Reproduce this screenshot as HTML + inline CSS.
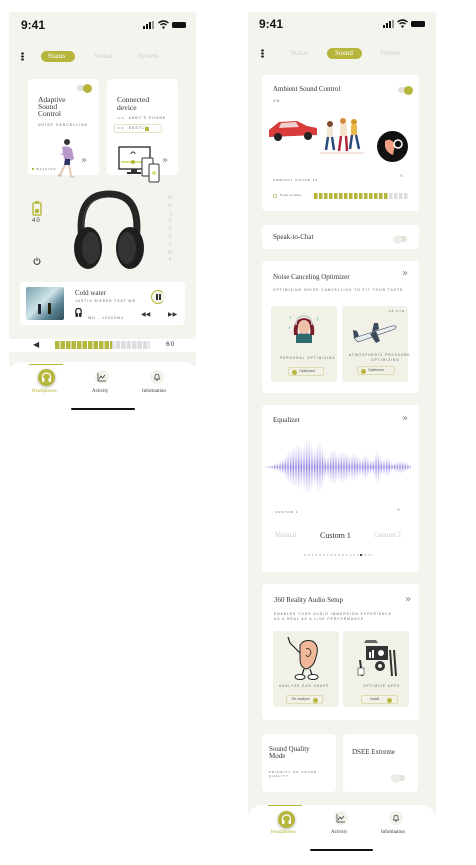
<!DOCTYPE html>
<html><head><meta charset="utf-8"><style>
*{margin:0;padding:0;box-sizing:border-box}
body{width:476px;height:865px;background:#fff;position:relative;overflow:hidden;font-family:"Liberation Serif",serif;color:#333}
.a{position:absolute}
.bg{background:#f4f4ee}
.card{position:absolute;background:#fff;border-radius:4px}
.sub{position:absolute;background:#f1f1e8;border-radius:3px}
.t{position:absolute;white-space:nowrap}
.cap{font-size:3.5px;letter-spacing:1px;color:#666;font-family:"Liberation Sans",sans-serif}
.ol{background:#b6b53c}
.tog{position:absolute;width:14px;height:6px;border-radius:3px;background:#e2e2da}
.tog i{position:absolute;width:9px;height:9px;border-radius:50%;top:-1.5px}
.btn{position:absolute;border:1px solid #dcdcb0;border-radius:2px;height:9px;font-size:3.5px;color:#555;font-family:"Liberation Sans",sans-serif;line-height:7px;padding-left:10px}
.btn b{position:absolute;left:3px;top:1.5px;width:5px;height:5px;border-radius:50%;background:#b6b53c}
.chev{font-size:10px;color:#888;font-family:"DejaVu Sans",sans-serif}
</style></head><body>

<!-- LEFT PHONE -->
<div class="a bg" style="left:9px;top:12px;width:187px;height:327px"></div>
<div class="a" style="left:9px;top:339px;width:187px;height:13px;background:#fff"></div>
<div class="a bg" style="left:9px;top:352px;width:187px;height:14px"></div>
<div class="a" style="left:9px;top:362px;width:187px;height:56px;background:#fff;border-radius:12px 12px 0 0"></div>
<div class="t" style="left:21px;top:18px;font:bold 12px 'Liberation Sans',sans-serif;color:#111">9:41</div>
<div class="a" style="left:143px;top:21px;width:14px;height:8px">
<div class="a" style="left:0;top:5px;width:2px;height:3px;background:#111"></div><div class="a" style="left:3px;top:3px;width:2px;height:5px;background:#111"></div><div class="a" style="left:6px;top:1px;width:2px;height:7px;background:#111"></div><div class="a" style="left:9px;top:0;width:2px;height:8px;background:#999"></div></div>
<svg class="a" style="left:158px;top:20px" width="11" height="9" viewBox="0 0 11 9"><path d="M0.5 3 Q5.5 -1 10.5 3" stroke="#111" stroke-width="1.4" fill="none"/><path d="M2.5 5 Q5.5 2.5 8.5 5" stroke="#111" stroke-width="1.4" fill="none"/><circle cx="5.5" cy="7.5" r="1.2" fill="#111"/></svg>
<div class="a" style="left:172px;top:22px;width:14px;height:6px;background:#111;border-radius:1.5px"></div>
<div class="a" style="left:21px;top:52px;width:2.5px;height:9px;background:radial-gradient(circle,#333 1.2px,transparent 1.3px) 0 0/2.5px 3px"></div>
<div class="a ol" style="left:41px;top:51px;width:34px;height:11px;border-radius:6px"></div>
<div class="t" style="left:48px;top:52px;font-size:7px;color:#fff">Status</div>
<div class="t" style="left:94px;top:52px;font-size:7px;color:#ccc">Sound</div>
<div class="t" style="left:138px;top:52px;font-size:7px;color:#ccc">System</div>

<div class="card" style="left:28px;top:79px;width:71px;height:96px"></div>
<div class="tog" style="left:77px;top:85px"><i class="ol" style="left:6px"></i></div>
<div class="t" style="left:38px;top:96px;font-size:7.5px;line-height:7px;color:#333">Adaptive<br>Sound<br>Control</div>
<div class="t cap" style="left:38px;top:123px">NOISE CANCELLING</div>
<svg class="a" style="left:52px;top:137px" width="24" height="42" viewBox="0 0 24 42"><circle cx="15" cy="5" r="3" fill="#333"/><path d="M10 10 Q16 8 20 12 L22 22 L18 24 L12 22 Z" fill="#b89ac8"/><path d="M8 18 L13 14 L14 17 Z" fill="#b89ac8"/><path d="M13 22 L18 22 L18 28 L12 28 Z" fill="#2c3566"/><path d="M13 28 L8 38 M17 28 L19 38" stroke="#e8c8b0" stroke-width="2"/><path d="M6 38 L10 39 M18 39 L22 40" stroke="#ccc" stroke-width="2"/></svg>
<div class="a ol" style="left:32px;top:168px;width:2px;height:2px"></div>
<div class="t cap" style="left:36px;top:167px;font-size:3px">WALKING</div>
<div class="t chev" style="left:81px;top:155px">»</div>

<div class="card" style="left:107px;top:79px;width:71px;height:96px"></div>
<div class="t" style="left:117px;top:96px;font-size:7.5px;line-height:7.5px">Connected<br>device</div>
<div class="t cap" style="left:117px;top:116px">⊂⊃&nbsp; ABBY'S PHONE</div>
<div class="a" style="left:114px;top:124px;width:48px;height:9px;border:1px solid #e4e4c8;border-radius:2px"></div>
<div class="t cap" style="left:117px;top:126px">⊂⊃&nbsp; BEETLE</div>
<div class="a ol" style="left:145px;top:127px;width:4px;height:4px"></div>
<svg class="a" style="left:118px;top:146px" width="44" height="38" viewBox="0 0 44 38"><rect x="1" y="1" width="31" height="22" fill="#fff" stroke="#333" stroke-width="1.4"/><rect x="3" y="15" width="27" height="2" fill="#dde08a"/><circle cx="15" cy="16" r="2" fill="#b6b53c"/><path d="M13 8 a2 2 0 0 1 4 0" stroke="#333" fill="none"/><rect x="13" y="23" width="6" height="3" fill="#333"/><rect x="9" y="26" width="14" height="2" fill="#333"/><rect x="24" y="12" width="11" height="18" rx="1" fill="#fff" stroke="#333"/><rect x="31" y="18" width="10" height="18" rx="1.5" fill="#fff" stroke="#333"/><circle cx="36" cy="27" r="2" fill="#dde08a"/></svg>
<div class="t chev" style="left:162px;top:155px">»</div>

<svg class="a" style="left:32px;top:201px" width="10" height="15" viewBox="0 0 10 15"><rect x="3" y="0" width="4" height="2" fill="#b6b53c"/><rect x="1" y="2" width="8" height="12" rx="1" fill="none" stroke="#b6b53c" stroke-width="1.4"/><rect x="3" y="8" width="4" height="4" fill="#b6b53c"/></svg>
<div class="t" style="left:32px;top:218px;font-size:6px;letter-spacing:1px;font-family:'Liberation Sans'">40</div>
<svg class="a" style="left:33px;top:257px" width="8" height="8" viewBox="0 0 8 8"><path d="M2.2 2 A3 3 0 1 0 5.8 2" fill="none" stroke="#333" stroke-width="1"/><path d="M4 0.5 V4" stroke="#333" stroke-width="1"/></svg>
<svg class="a" style="left:68px;top:190px" width="82" height="82" viewBox="0 0 82 82"><path d="M14 50 Q8 4 41 4 Q74 4 68 50" fill="none" stroke="#252525" stroke-width="7"/><path d="M16 44 Q11 8 41 7" fill="none" stroke="#444" stroke-width="1"/><ellipse cx="20" cy="58" rx="14" ry="21" fill="#1e1e1e"/><ellipse cx="62" cy="58" rx="14" ry="21" fill="#1e1e1e"/><ellipse cx="23" cy="58" rx="9" ry="16" fill="#333"/><ellipse cx="59" cy="58" rx="9" ry="16" fill="#333"/></svg>
<div class="t" style="left:167px;top:195px;font-size:5px;line-height:7.8px;color:#ccc;font-family:'Liberation Sans';text-align:center;width:6px;white-space:normal">W H - 1 0 0 0 X M 4</div>

<div class="card" style="left:20px;top:282px;width:165px;height:43px"></div>
<div class="a" style="left:26px;top:287px;width:38px;height:33px;border-radius:2px;background:linear-gradient(135deg,#7aa2b0,#cfe3e8 45%,#5e8799 70%,#2f4b58)"></div>
<div class="a" style="left:38px;top:304px;width:3px;height:10px;background:#223"></div><div class="a" style="left:48px;top:303px;width:3px;height:11px;background:#221"></div>
<div class="t" style="left:75px;top:289px;font-size:7px">Cold water</div>
<div class="t cap" style="left:75px;top:299px;font-size:3.3px">JUSTIN BIEBER FEAT MØ</div>
<svg class="a" style="left:75px;top:308px" width="7" height="9" viewBox="0 0 7 9"><path d="M1 6 Q0 0 3.5 0.5 Q7 0 6 6" fill="none" stroke="#222" stroke-width="1.2"/><rect x="0.5" y="5" width="2.5" height="4" rx="1" fill="#222"/><rect x="4" y="5" width="2.5" height="4" rx="1" fill="#222"/></svg>
<div class="t cap" style="left:88px;top:316px">WH - 1000XM4</div>
<div class="a" style="left:151px;top:290px;width:14px;height:14px;border-radius:50%;border:1.5px solid #b6b53c;border-right-color:transparent;background:#f4f4ee"></div>
<div class="a" style="left:156px;top:294px;width:1.5px;height:6px;background:#333"></div><div class="a" style="left:159px;top:294px;width:1.5px;height:6px;background:#333"></div>
<div class="t" style="left:141px;top:311px;font-size:6px;font-family:'DejaVu Sans'">◀◀</div>
<div class="t" style="left:168px;top:311px;font-size:6px;font-family:'DejaVu Sans'">▶▶</div>

<div class="t" style="left:33px;top:340px;font-size:8px;font-family:'DejaVu Sans'">◀</div>
<div class="a" style="left:55px;top:341px;width:95px;height:8px;background:repeating-linear-gradient(90deg,#b6b53c 0 4.5px,#fff 4.5px 5.5px) 0 0/57px 8px no-repeat,repeating-linear-gradient(90deg,#ddd 0 4.5px,#fff 4.5px 5.5px)"></div>
<div class="t" style="left:166px;top:341px;font-size:6.5px;letter-spacing:1px;font-family:'Liberation Sans'">60</div>

<div class="a ol" style="left:29px;top:364px;width:34px;height:1.2px"></div>
<div class="a ol" style="left:38px;top:369px;width:17px;height:17px;border-radius:50%;box-shadow:0 1px 3px rgba(0,0,0,.3)"></div>
<svg class="a" style="left:41px;top:372px" width="11" height="11" viewBox="0 0 11 11"><path d="M1.5 7 Q1 1 5.5 1 Q10 1 9.5 7" fill="none" stroke="#fff" stroke-width="1.2"/><rect x="1" y="6" width="2.5" height="4" rx="1" fill="#fff"/><rect x="7.5" y="6" width="2.5" height="4" rx="1" fill="#fff"/></svg>
<div class="t" style="left:32px;top:389px;font-size:5px;color:#b6b53c">Headphones</div>
<div class="a" style="left:95px;top:370px;width:14px;height:14px;border-radius:50%;background:#f2f2ea"></div>
<svg class="a" style="left:97px;top:372px" width="10" height="10" viewBox="0 0 10 10"><path d="M1 1 V9 H9" fill="none" stroke="#333" stroke-width=".7"/><path d="M2 7 L4 4 L5.5 6 L8 3" fill="none" stroke="#333" stroke-width=".7"/></svg>
<div class="t" style="left:92px;top:389px;font-size:5px">Activity</div>
<div class="a" style="left:150px;top:370px;width:14px;height:14px;border-radius:50%;background:#f2f2ea"></div>
<svg class="a" style="left:153px;top:373px" width="8" height="8" viewBox="0 0 8 8"><path d="M1.5 6 Q2 5 2 3.5 Q2 1.2 4 1.2 Q6 1.2 6 3.5 Q6 5 6.5 6 Z" fill="none" stroke="#333" stroke-width=".7"/><circle cx="4" cy="7" r=".7" fill="#333"/></svg>
<div class="t" style="left:142px;top:389px;font-size:5px">Information</div>
<div class="a" style="left:71px;top:408px;width:64px;height:2px;background:#111;border-radius:1px"></div>

<!-- RIGHT PHONE -->
<div class="a bg" style="left:248px;top:12px;width:188px;height:848px"></div>
<div class="t" style="left:259px;top:17px;font:bold 12px 'Liberation Sans',sans-serif;color:#111">9:41</div>
<div class="a" style="left:383px;top:20px;width:14px;height:8px">
<div class="a" style="left:0;top:5px;width:2px;height:3px;background:#111"></div><div class="a" style="left:3px;top:3px;width:2px;height:5px;background:#111"></div><div class="a" style="left:6px;top:1px;width:2px;height:7px;background:#111"></div><div class="a" style="left:9px;top:0;width:2px;height:8px;background:#999"></div></div>
<svg class="a" style="left:397px;top:19px" width="11" height="9" viewBox="0 0 11 9"><path d="M0.5 3 Q5.5 -1 10.5 3" stroke="#111" stroke-width="1.4" fill="none"/><path d="M2.5 5 Q5.5 2.5 8.5 5" stroke="#111" stroke-width="1.4" fill="none"/><circle cx="5.5" cy="7.5" r="1.2" fill="#111"/></svg>
<div class="a" style="left:411px;top:21px;width:14px;height:6px;background:#111;border-radius:1.5px"></div>
<div class="a" style="left:261px;top:49px;width:2.5px;height:9px;background:radial-gradient(circle,#333 1.2px,transparent 1.3px) 0 0/2.5px 3px"></div>
<div class="t" style="left:291px;top:49px;font-size:7px;color:#ccc">Status</div>
<div class="a ol" style="left:327px;top:48px;width:35px;height:11px;border-radius:6px"></div>
<div class="t" style="left:335px;top:49px;font-size:7px;color:#fff">Sound</div>
<div class="t" style="left:380px;top:49px;font-size:7px;color:#ccc">System</div>

<div class="card" style="left:262px;top:75px;width:157px;height:136px"></div>
<div class="t" style="left:273px;top:85px;font-size:7px">Ambient Sound Control</div>
<div class="tog" style="left:398px;top:87px"><i class="ol" style="left:6px"></i></div>
<div class="t cap" style="left:273px;top:99px">ON</div>
<svg class="a" style="left:267px;top:118px" width="52" height="26" viewBox="0 0 52 26"><path d="M2 12 L12 4 L30 3 L40 8 L50 10 L50 17 L2 19 Z" fill="#d93a3a"/><path d="M14 5 L29 4 L32 9 L12 10Z" fill="#f2d0d0"/><circle cx="11" cy="19" r="4" fill="#222"/><circle cx="41" cy="18" r="4" fill="#222"/></svg>
<svg class="a" style="left:320px;top:118px" width="46" height="38" viewBox="0 0 46 38"><circle cx="10" cy="6" r="3" fill="#7a4a2a"/><rect x="7" y="9" width="6" height="10" fill="#f2e8d8"/><path d="M8 19 L6 32 M12 19 L14 32" stroke="#2c4a7a" stroke-width="2.5"/><circle cx="23" cy="3" r="3" fill="#d48a3a"/><rect x="20" y="6" width="7" height="12" fill="#f2e4cc"/><path d="M21 18 L19 33 M26 18 L27 33" stroke="#b2283a" stroke-width="2.5"/><circle cx="34" cy="4" r="3" fill="#d49a2a"/><rect x="31" y="7" width="6" height="10" fill="#e8b84a"/><path d="M32 17 L30 31 M36 17 L39 31" stroke="#2c4a7a" stroke-width="2.5"/><path d="M0 35 L44 35" stroke="#e8c8c0" stroke-width="1"/></svg>
<div class="a" style="left:377px;top:131px;width:31px;height:31px;border-radius:50%;background:#111"></div>
<svg class="a" style="left:381px;top:135px" width="24" height="24" viewBox="0 0 24 24"><path d="M4 6 Q10 2 14 10 L12 20 Q6 18 4 12Z" fill="#f0a080"/><circle cx="17" cy="9" r="4" fill="none" stroke="#fff" stroke-width="1.5"/></svg>
<div class="t cap" style="left:273px;top:178px;font-size:3px">AMBIENT SOUND 18</div>
<div class="t" style="left:400px;top:174px;font-size:6px;color:#666">^</div>
<div class="a" style="left:273px;top:194px;width:4px;height:4px;border:0.7px solid #cc9"></div>
<div class="t" style="left:280px;top:193px;font-size:3.5px;color:#666">Focus on Voice</div>
<div class="a" style="left:314px;top:193px;width:95px;height:6px;background:repeating-linear-gradient(90deg,#b6b53c 0 3.5px,#fff 3.5px 5px) 0 0/75px 6px no-repeat,repeating-linear-gradient(90deg,#ddd 0 3.5px,#fff 3.5px 5px)"></div>

<div class="card" style="left:262px;top:225px;width:157px;height:24px"></div>
<div class="t" style="left:273px;top:233px;font-size:7px">Speak-to-Chat</div>
<div class="tog" style="left:393px;top:236px"><i style="left:0;background:#eeeee8"></i></div>

<div class="card" style="left:262px;top:261px;width:157px;height:132px"></div>
<div class="t" style="left:273px;top:273px;font-size:7px">Noise Canceling Optimizer</div>
<div class="t chev" style="left:402px;top:268px">»</div>
<div class="t cap" style="left:273px;top:288px;font-size:3.3px">OPTIMIZING NOISE CANCELLING TO FIT YOUR TASTE</div>
<div class="sub" style="left:271px;top:306px;width:66px;height:76px"></div>
<svg class="a" style="left:288px;top:313px" width="32" height="30" viewBox="0 0 32 30"><path d="M8 30 L8 22 Q16 18 24 22 L24 30Z" fill="#2e6a6e"/><path d="M6 22 Q4 6 16 5 Q28 6 26 22 L22 22 Q24 10 16 10 Q8 10 10 22Z" fill="#7a1e2a"/><ellipse cx="16" cy="14" rx="6" ry="7" fill="#f0c0a8"/><path d="M8 12 Q8 3 16 3 Q24 3 24 12" fill="none" stroke="#ccc" stroke-width="1.5"/><path d="M2 6 L3 3 M29 8 L30 4 M1 16 L2 13" stroke="#8cc" stroke-width="1"/></svg>
<div class="t cap" style="left:280px;top:356px;font-size:3.2px">PERSONAL OPTIMIZING</div>
<div class="btn" style="left:288px;top:367px;width:36px"><b></b>Optimized</div>
<div class="sub" style="left:342px;top:306px;width:66px;height:76px"></div>
<div class="t cap" style="left:389px;top:309px;font-size:3px">18 KTH</div>
<svg class="a" style="left:352px;top:320px" width="46" height="24" viewBox="0 0 46 24"><path d="M2 18 L40 6 Q46 5 43 9 L6 22 Z" fill="#e8ecf0" stroke="#3a4a5a" stroke-width="0.6"/><path d="M18 14 L24 23 L28 21 L24 11Z" fill="#3a4a5a"/><path d="M20 12 L22 3 L26 3 L27 9Z" fill="#3a4a5a"/><path d="M2 18 L1 10 L5 11 L7 16Z" fill="#3a4a5a"/></svg>
<div class="t cap" style="left:349px;top:353px;font-size:3.2px;text-align:center;line-height:5px">ATMOSPHERIC PRESSURE<br>&nbsp;&nbsp;&nbsp;&nbsp;&nbsp;&nbsp;OPTIMIZING</div>
<div class="btn" style="left:357px;top:366px;width:38px"><b></b>Optimized</div>

<div class="card" style="left:262px;top:405px;width:157px;height:167px"></div>
<div class="t" style="left:273px;top:416px;font-size:7px">Equalizer</div>
<div class="t chev" style="left:402px;top:413px">»</div>
<svg class="a" style="left:266px;top:435px" width="146" height="64" viewBox="0 0 146 64">
<defs><linearGradient id="g" x1="0" y1="0" x2="0" y2="1"><stop offset="0" stop-color="#d8d2f6" stop-opacity=".3"/><stop offset=".5" stop-color="#7462d6"/><stop offset="1" stop-color="#d8d2f6" stop-opacity=".3"/></linearGradient></defs>
<g fill="url(#g)" id="w"></g>
</svg>
<div class="t cap" style="left:275px;top:510px;font-size:3px">CUSTOM 1</div>
<div class="t" style="left:397px;top:508px;font-size:6px;color:#666">^</div>
<div class="t" style="left:275px;top:531px;font-size:7px;color:#ccc">Manual</div>
<div class="t" style="left:320px;top:531px;font-size:8px;color:#333">Custom 1</div>
<div class="t" style="left:374px;top:531px;font-size:7px;color:#ccc">Custom 2</div>
<div class="a" style="left:303px;top:554px;width:70px;height:2px;background:radial-gradient(circle,#ccc .8px,transparent 1px) 0 0/3.8px 2px"></div>
<div class="a" style="left:360px;top:554px;width:2px;height:2px;border-radius:50%;background:#111"></div>

<div class="card" style="left:262px;top:584px;width:157px;height:136px"></div>
<div class="t" style="left:274px;top:596px;font-size:7px">360 Reality Audio Setup</div>
<div class="t chev" style="left:405px;top:594px">»</div>
<div class="t cap" style="left:274px;top:612px;font-size:3.3px;line-height:5px">ENABLES YOUR AUDIO IMMERSION EXPERIENCE<br>AS A REAL AS A LIVE PERFORMANCE</div>
<div class="sub" style="left:273px;top:631px;width:66px;height:76px"></div>
<svg class="a" style="left:284px;top:635px" width="40" height="46" viewBox="0 0 40 46"><path d="M16 10 Q20 4 28 6 Q36 10 32 22 Q30 32 22 34 Q16 32 16 24 Z" fill="#f0b898" stroke="#222" stroke-width="1"/><path d="M22 14 Q26 12 27 18 Q24 24 22 20" fill="none" stroke="#222" stroke-width="0.8"/><path d="M16 18 L6 8 M4 2 L6 8" stroke="#222" stroke-width="1.2"/><path d="M20 34 L18 40 M26 34 L28 40" stroke="#222" stroke-width="1.2"/><ellipse cx="16" cy="42" rx="5" ry="2.5" fill="#fff" stroke="#222"/><ellipse cx="29" cy="42" rx="5" ry="2.5" fill="#fff" stroke="#222"/></svg>
<div class="t cap" style="left:279px;top:684px;font-size:3.2px">ANALYZE EAR SHAPE</div>
<div class="btn" style="left:286px;top:695px;width:37px;padding-left:5px">Re-analyze<b style="left:26px"></b></div>
<div class="sub" style="left:343px;top:631px;width:66px;height:76px"></div>
<svg class="a" style="left:356px;top:638px" width="44" height="40" viewBox="0 0 44 40"><rect x="10" y="8" width="22" height="14" fill="#333"/><rect x="13" y="14" width="2" height="6" fill="#fff"/><rect x="16" y="12" width="2" height="8" fill="#fff"/><circle cx="25" cy="15" r="3" fill="#fff"/><circle cx="24" cy="28" r="5" fill="#333"/><circle cx="24" cy="28" r="2" fill="#f1f1e8"/><path d="M4 22 L6 38 M34 12 L36 38 M38 12 L40 38" stroke="#333" stroke-width="2"/><rect x="2" y="30" width="6" height="7" fill="#fff" stroke="#333" stroke-width=".6"/><path d="M10 2 L20 2 L22 5 L8 5Z" fill="#666"/></svg>
<div class="t cap" style="left:363px;top:684px;font-size:3.2px">OPTIMIZE APPS</div>
<div class="btn" style="left:361px;top:695px;width:37px;padding-left:8px">Install<b style="left:25px"></b></div>

<div class="card" style="left:262px;top:734px;width:74px;height:58px"></div>
<div class="t" style="left:269px;top:746px;font-size:7px;line-height:7px">Sound Quality<br>Mode</div>
<div class="t cap" style="left:269px;top:771px;font-size:3px;line-height:3.5px">PRIORITY ON SOUND<br>QUALITY</div>
<div class="card" style="left:343px;top:734px;width:75px;height:58px"></div>
<div class="t" style="left:352px;top:748px;font-size:7px">DSEE Extreme</div>
<div class="tog" style="left:391px;top:775px"><i style="left:0;background:#eeeee8"></i></div>

<div class="a" style="left:248px;top:805px;width:188px;height:55px;background:#fff;border-radius:14px 14px 0 0"></div>
<div class="a ol" style="left:268px;top:805px;width:34px;height:1.2px"></div>
<div class="a ol" style="left:278px;top:811px;width:17px;height:17px;border-radius:50%;box-shadow:0 1px 3px rgba(0,0,0,.3)"></div>
<svg class="a" style="left:281px;top:814px" width="11" height="11" viewBox="0 0 11 11"><path d="M1.5 7 Q1 1 5.5 1 Q10 1 9.5 7" fill="none" stroke="#fff" stroke-width="1.2"/><rect x="1" y="6" width="2.5" height="4" rx="1" fill="#fff"/><rect x="7.5" y="6" width="2.5" height="4" rx="1" fill="#fff"/></svg>
<div class="t" style="left:271px;top:830px;font-size:5px;color:#b6b53c">Headphones</div>
<div class="a" style="left:334px;top:811px;width:14px;height:14px;border-radius:50%;background:#f2f2ea"></div>
<svg class="a" style="left:336px;top:813px" width="10" height="10" viewBox="0 0 10 10"><path d="M1 1 V9 H9" fill="none" stroke="#333" stroke-width=".7"/><path d="M2 7 L4 4 L5.5 6 L8 3" fill="none" stroke="#333" stroke-width=".7"/></svg>
<div class="t" style="left:331px;top:830px;font-size:5px">Activity</div>
<div class="a" style="left:389px;top:811px;width:14px;height:14px;border-radius:50%;background:#f2f2ea"></div>
<svg class="a" style="left:392px;top:814px" width="8" height="8" viewBox="0 0 8 8"><path d="M1.5 6 Q2 5 2 3.5 Q2 1.2 4 1.2 Q6 1.2 6 3.5 Q6 5 6.5 6 Z" fill="none" stroke="#333" stroke-width=".7"/><circle cx="4" cy="7" r=".7" fill="#333"/></svg>
<div class="t" style="left:381px;top:830px;font-size:5px">Information</div>
<div class="a" style="left:310px;top:849px;width:63px;height:2px;background:#111;border-radius:1px"></div>

<script>
var pk=[[14,6,4],[24,20,3],[34,12,4],[44,24,10],[55,8,5],[70,17,5],[84,15,6],[98,12,4],[110,17,3],[120,12,3],[132,8,3],[140,4,3]];
var g=document.getElementById('w'),s='';
for(var x=0;x<144;x+=1.6){var e=1;for(var j=0;j<pk.length;j++){var d=(x-pk[j][0])/pk[j][2];e+=pk[j][1]*Math.exp(-d*d/2);}
var m=0.55+0.45*Math.abs(Math.sin(x*1.7));var h=Math.min(31,e*m);
s+='<rect x="'+x.toFixed(1)+'" y="'+(32-h).toFixed(1)+'" width="0.8" height="'+(h*2).toFixed(1)+'"/>';}
g.innerHTML=s;
</script>
</body></html>
